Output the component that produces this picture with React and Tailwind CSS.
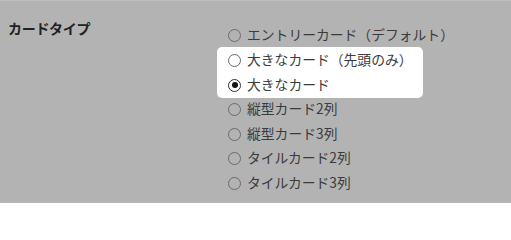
import React, { useState } from "react";

const options = [
  "エントリーカード（デフォルト）",
  "大きなカード（先頭のみ）",
  "大きなカード",
  "縦型カード2列",
  "縦型カード3列",
  "タイルカード2列",
  "タイルカード3列",
];

function RadioRow({ label, checked, onPick }) {
  return (
    <label
      className="flex items-center h-[24.5px] pl-[11px] gap-[6px] cursor-pointer text-[#3b3b3b]"
      onClick={onPick}
    >
      {checked ? (
        <span className="w-[13px] h-[13px] rounded-full border-[1.5px] border-[#333] flex items-center justify-center bg-white">
          <span className="w-[6px] h-[6px] rounded-full bg-[#111]" />
        </span>
      ) : (
        <span className="w-[13px] h-[13px] rounded-full border border-[#6a6a6a]" />
      )}
      <span className="text-[13.8px] leading-none pb-[1px]">{label}</span>
    </label>
  );
}

export default function App() {
  const [picked, setPicked] = useState(2);

  return (
    <div
      className="w-[511px] h-[203px] bg-[#b3b3b3] border-t border-[#bebebe] flex overflow-hidden"
      style={{ fontFamily: '"Noto Sans CJK JP", "Noto Sans", sans-serif' }}
    >
      <div className="w-[217px] pl-[8px] pt-[17px] text-[14px] font-bold text-[#222] tracking-[-0.3px]">
        カードタイプ
      </div>
      <div className="flex flex-col pt-[22px]">
        <RadioRow label={options[0]} checked={picked == 0} onPick={() => setPicked(0)} />
        <div className="bg-white rounded-[5px] w-[206px] pt-[2px] mt-[-1px]">
          <RadioRow label={options[1]} checked={picked == 1} onPick={() => setPicked(1)} />
          <RadioRow label={options[2]} checked={picked == 2} onPick={() => setPicked(2)} />
        </div>
        {options.slice(3).map((opt, i) => (
          <RadioRow
            key={opt}
            label={opt}
            checked={picked == i + 3}
            onPick={() => setPicked(i + 3)}
          />
        ))}
      </div>
    </div>
  );
}
